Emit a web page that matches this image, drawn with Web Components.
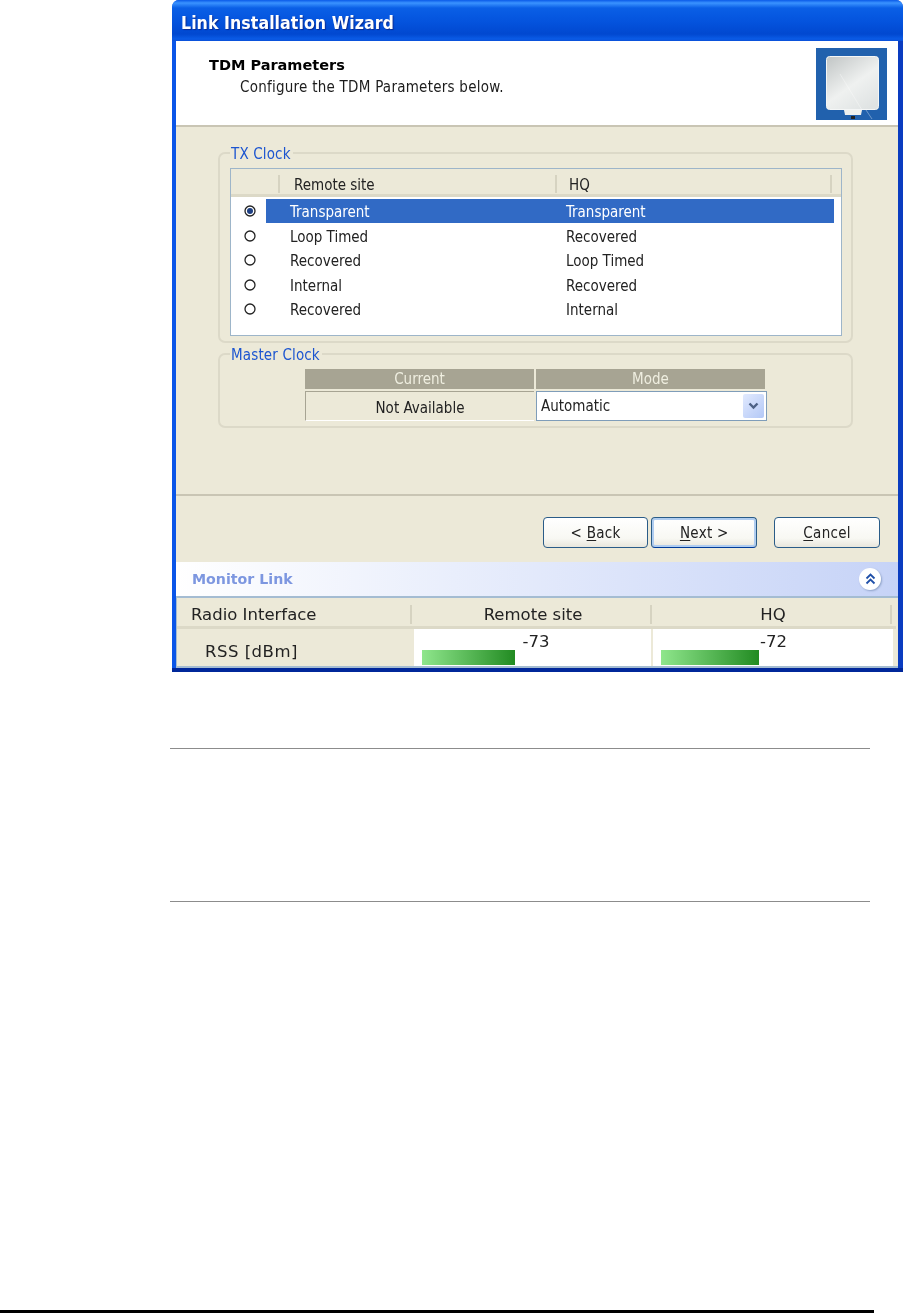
<!DOCTYPE html>
<html>
<head>
<meta charset="utf-8">
<title>Link Installation Wizard</title>
<style>
  html, body { margin: 0; padding: 0; background: #fff; }
  body { font-family: "DejaVu Sans", sans-serif; color: #111; }
</style>
</head>
<body>
<manual-page>
  <xp-window caption="Link Installation Wizard">
    <wizard-header title-text="TDM Parameters" subtitle="Configure the TDM Parameters below."></wizard-header>
    <wizard-body>
      <group-box caption="TX Clock" class="tx">
        <clock-table>
          <clock-row remote="Transparent" hq="Transparent" selected></clock-row>
          <clock-row remote="Loop Timed" hq="Recovered"></clock-row>
          <clock-row remote="Recovered" hq="Loop Timed"></clock-row>
          <clock-row remote="Internal" hq="Recovered"></clock-row>
          <clock-row remote="Recovered" hq="Internal"></clock-row>
        </clock-table>
      </group-box>
      <group-box caption="Master Clock" class="master">
        <master-table></master-table>
      </group-box>
    </wizard-body>
    <wizard-buttons>
      <xp-button label="&lt; |B|ack"></xp-button>
      <xp-button label="|N|ext &gt;" focused></xp-button>
      <xp-button label="|C|ancel" class="cancel"></xp-button>
    </wizard-buttons>
    <monitor-link></monitor-link>
  </xp-window>
</manual-page>

<script>
function makeTemplate(html) {
  const t = document.createElement('template');
  t.innerHTML = html;
  return t;
}

// small base so each element only has to say its template
class ShadowEl extends HTMLElement {
  constructor(template) {
    super();
    this.attachShadow({ mode: 'open' });
    this.shadowRoot.appendChild(template.content.cloneNode(true));
  }
  $(sel) { return this.shadowRoot.querySelector(sel); }
}

const pageTpl = makeTemplate(`
<style>
  :host { display: block; width: 903px; height: 1313px; overflow: hidden; }
  .shot { padding-left: 172px; }
  .rules { margin: 76px 33px 0 170px; height: 152px; border-top: 1px solid #8c8c8c; border-bottom: 1px solid #8c8c8c; }
  .foot { margin: 408px 29px 0 0; height: 3px; background: #000; }
</style>
<div class="shot"><slot></slot></div>
<div class="rules"></div>
<div class="foot"></div>
`);
customElements.define('manual-page', class extends ShadowEl {
  constructor() { super(pageTpl); }
});

const windowTpl = makeTemplate(`
<style>
  :host { display: block; width: 731px; height: 672px; }
  .frame {
    height: 672px; box-sizing: border-box;
    display: flex; flex-direction: column;
    border-radius: 7px 7px 0 0;
    background: linear-gradient(0deg, #00279a 0 4px, transparent 4px),
                linear-gradient(90deg, #0a55e8 0 4px, #0a4fd8 4px 726px, #0a3cc0 726px);
    padding: 0 5px 4px 4px;
    filter: blur(0.35px);
  }
  .bar {
    flex: none; height: 41px; margin: 0 -5px 0 -4px; padding: 5px 0 0 9px; box-sizing: border-box;
    display: flex; align-items: center;
    background: linear-gradient(180deg, #0a5ae8 0, #3a93ff 3px, #0a5fe6 8px, #0453dd 22px, #0148d0 34px, #0a5be6 39px, #0a4fd8 41px);
    border-radius: 7px 7px 0 0;
    color: #fff; font: bold 17.6px "DejaVu Sans Condensed", "DejaVu Sans", sans-serif;
    letter-spacing: .05px;
    text-shadow: 1px 1px 1px #0a2a90;
  }
  .content { flex: 1; min-height: 0; display: flex; flex-direction: column; background: #ECE9D8; }
</style>
<div class="frame">
  <div class="bar"></div>
  <div class="content"><slot></slot></div>
</div>
`);
customElements.define('xp-window', class extends ShadowEl {
  constructor() { super(windowTpl); }
  connectedCallback() { this.$('.bar').textContent = this.getAttribute('caption'); }
});

const headerTpl = makeTemplate(`
<style>
  :host { display: block; flex: none; }
  .head {
    height: 86px; box-sizing: border-box; background: #fff;
    border-bottom: 2px solid #c9c5b4;
    display: flex; justify-content: space-between;
    padding: 7px 11px 0 33px;
  }
  .t { font: bold 14.5px "DejaVu Sans", sans-serif; margin-top: 8px; line-height: 18px; color: #000; }
  .s { font: 15px "DejaVu Sans Condensed", "DejaVu Sans", sans-serif; margin: 4px 0 0 31px; line-height: 18px; color: #1c1c1c; letter-spacing: .25px; }
  svg { display: block; }
</style>
<div class="head">
  <div>
    <div class="t"></div>
    <div class="s"></div>
  </div>
  <svg width="71" height="72" viewBox="0 0 71 72">
    <defs>
      <linearGradient id="panel" x1="0.1" y1="0" x2="0.8" y2="1">
        <stop offset="0" stop-color="#c4c8c8"/>
        <stop offset=".55" stop-color="#eff1f0"/>
        <stop offset="1" stop-color="#dfe3e3"/>
      </linearGradient>
    </defs>
    <rect width="71" height="72" fill="#2161ad"/>
    <rect x="10.5" y="8.5" width="52" height="53" rx="3" fill="url(#panel)" stroke="#f4f6f6"/>
    <path d="M28 62 L46 62 L45 67 L29 67 Z" fill="#eef0ee"/>
    <rect x="35" y="68" width="4" height="3" fill="#222"/>
    <path d="M24 26 L46 62 M50 62 L56 71" stroke="#fff" stroke-opacity=".5" stroke-width=".7" fill="none"/>
  </svg>
</div>
`);
customElements.define('wizard-header', class extends ShadowEl {
  constructor() { super(headerTpl); }
  connectedCallback() {
    this.$('.t').textContent = this.getAttribute('title-text');
    this.$('.s').textContent = this.getAttribute('subtitle');
  }
});

const bodyTpl = makeTemplate(`
<style>
  :host { display: block; flex: none; height: 369px; box-sizing: border-box; border-bottom: 2px solid #c9c5b4; padding: 17px 0 0 42px; }
  .stack { width: 635px; display: flex; flex-direction: column; gap: 2px; }
</style>
<div class="stack"><slot></slot></div>
`);
customElements.define('wizard-body', class extends ShadowEl {
  constructor() { super(bodyTpl); }
});

const groupTpl = makeTemplate(`
<style>
  :host { display: block; font: 15px "DejaVu Sans Condensed", "DejaVu Sans", sans-serif; }
  fieldset {
    margin: 0; padding: 6px 9px 5px 10px; min-width: 0;
    border: 2px solid #dcd9c8; border-radius: 7px;
  }
  legend { padding: 3px 2px 0 1px; color: #1c55d0; line-height: 15px; letter-spacing: .15px; }
</style>
<fieldset>
  <legend></legend>
  <slot></slot>
</fieldset>
`);
customElements.define('group-box', class extends ShadowEl {
  constructor() { super(groupTpl); }
  connectedCallback() { this.$('legend').textContent = this.getAttribute('caption'); }
});

const tableTpl = makeTemplate(`
<style>
  :host { display: block; }
  .box { height: 168px; box-sizing: border-box; border: 1px solid #9db5c9; background: #fff; }
  .hdr {
    height: 28px; box-sizing: border-box; display: grid; grid-template-columns: 49px 277px 275px 1fr;
    background: #ECE9D8; border-bottom: 3px solid #dcd9c7; color: #222; align-items: start; padding-top: 6px;
  }
  .hdr span { height: 18px; line-height: 20px; border-right: 2px solid #d6d3c1; box-sizing: border-box; padding-left: 14px; }
  .hdr span:nth-child(3) { padding-left: 12px; }
  .hdr span:last-child { border: 0; }
  .rows { padding-top: 2px; }
</style>
<div class="box">
  <div class="hdr"><span></span><span>Remote site</span><span>HQ</span><span></span></div>
  <div class="rows"><slot></slot></div>
</div>
`);
customElements.define('clock-table', class extends ShadowEl {
  constructor() { super(tableTpl); }
});

const rowTpl = makeTemplate(`
<style>
  :host { display: block; }
  .row { height: 24.6px; display: flex; align-items: flex-start; }
  .radio { flex: none; width: 35px; display: flex; padding: 6px 0 0 13px; box-sizing: border-box; }
  .cells { width: 568px; height: 24px; display: grid; grid-template-columns: 300px 1fr; line-height: 26px; color: #222; }
  .cells span:first-child { padding-left: 24px; }
  :host([selected]) .cells { background: #316ac5; color: #fff; }
  svg { display: block; }
</style>
<div class="row">
  <div class="radio">
    <svg width="12" height="12" viewBox="0 0 12 12">
      <circle cx="6" cy="6" r="5" fill="#fff" stroke="#222" stroke-width="1.3"/>
      <circle class="dot" cx="6" cy="6" r="3" fill="#1d3f82"/>
    </svg>
  </div>
  <div class="cells"><span class="a"></span><span class="b"></span></div>
</div>
`);
customElements.define('clock-row', class extends ShadowEl {
  constructor() { super(rowTpl); }
  connectedCallback() {
    this.$('.a').textContent = this.getAttribute('remote');
    this.$('.b').textContent = this.getAttribute('hq');
    if (!this.hasAttribute('selected')) this.$('.dot').remove();
  }
});

const masterTpl = makeTemplate(`
<style>
  :host { display: block; padding: 0 0 0 75px; }
  .grid { width: 460px; display: grid; grid-template-columns: 229px 229px; column-gap: 2px; row-gap: 2px; }
  .h { height: 20px; line-height: 20px; background: #a7a493; color: #efeee0; text-align: center; }
  .cur { height: 30px; line-height: 33px; text-align: center; box-sizing: border-box; color: #222;
    border-left: 1px solid #a7a493; border-top: 1px solid #a7a493; border-bottom: 1px solid #fff; }
  .sel { height: 30px; width: 231px; box-sizing: border-box; border: 1px solid #7f9db9; background: #fff; color: #222;
    display: flex; align-items: center; justify-content: space-between; padding: 0 2px 0 4px; }
  .arrow { width: 21px; height: 24px; border-radius: 2px; background: linear-gradient(135deg, #e2eafe, #b3c8f6);
    display: flex; align-items: center; justify-content: center; }
</style>
<div class="grid">
  <div class="h">Current</div>
  <div class="h">Mode</div>
  <div class="cur">Not Available</div>
  <div class="sel">
    <span>Automatic</span>
    <span class="arrow">
      <svg width="11" height="8" viewBox="0 0 11 8"><path d="M1.5 1.5 L5.5 5.5 L9.5 1.5" fill="none" stroke="#4d6185" stroke-width="2.4"/></svg>
    </span>
  </div>
</div>
`);
customElements.define('master-table', class extends ShadowEl {
  constructor() { super(masterTpl); }
});

const buttonsTpl = makeTemplate(`
<style>
  :host { display: block; flex: none; height: 66px; box-sizing: border-box; padding: 21px 18px 0 0; }
  .row { display: flex; justify-content: flex-end; gap: 3px; }
  ::slotted(.cancel) { margin-left: 14px; }
</style>
<div class="row"><slot></slot></div>
`);
customElements.define('wizard-buttons', class extends ShadowEl {
  constructor() { super(buttonsTpl); }
});

const buttonTpl = makeTemplate(`
<style>
  :host { display: block; }
  button {
    display: block; width: 105.8px; height: 31px; padding: 0; margin: 0; box-sizing: border-box;
    border: 1.5px solid #2a5c88; border-radius: 4px;
    background: linear-gradient(180deg, #ffffff, #f8f8f3 70%, #e8e6dc);
    font: 15px "DejaVu Sans Condensed", "DejaVu Sans", sans-serif; color: #222; letter-spacing: .3px;
  }
  :host([focused]) button { box-shadow: inset 0 0 0 2px #b0cdf0; border-bottom-color: #003c9a; }
  u { text-underline-offset: 2px; }
</style>
<button type="button"></button>
`);
customElements.define('xp-button', class extends ShadowEl {
  constructor() { super(buttonTpl); }
  connectedCallback() {
    // label uses |x| to mark the access key
    const parts = this.getAttribute('label').split('|');
    const btn = this.$('button');
    btn.append(parts[0]);
    const u = document.createElement('u');
    u.textContent = parts[1];
    btn.append(u, parts[2]);
  }
});

const monitorTpl = makeTemplate(`
<style>
  :host { display: block; flex: 1; font: 16.5px "DejaVu Sans", sans-serif; color: #222; }
  .bar {
    height: 36px; box-sizing: border-box; display: flex; justify-content: space-between; align-items: center;
    padding: 0 17px 0 16px;
    background: linear-gradient(90deg, #ffffff, #c6d3f7);
    border-bottom: 2px solid #a4bcd2;
    color: #7d97e0; font: bold 14.2px "DejaVu Sans", sans-serif;
  }
  .toggle { width: 22px; height: 22px; border-radius: 50%; background: #fff; box-shadow: 1px 1px 2px #8fa3c9; display: flex; align-items: center; justify-content: center; }
  .grid { display: grid; grid-template-columns: 235px 240px 244px; border: solid #a4bcd2; border-width: 0 0 2px 1px; }
  .th { height: 31px; box-sizing: border-box; background: #ECE9D8; border-bottom: 3px solid #dcd9c7; padding-top: 7px; }
  .th span { display: block; height: 19px; line-height: 20px; text-align: center; border-right: 2px solid #d6d3c1; padding-left: 4px; box-sizing: border-box; }
  .th.first span { text-align: left; padding-left: 14px; }
  .th.last { padding-right: 4px; }
  .rss { height: 37px; line-height: 46px; padding-left: 28px; background: #ECE9D8; letter-spacing: .5px; }
  .val { height: 37px; background: #fff; margin: 0 1px 0 2px; position: relative; text-align: center; line-height: 26px; padding-left: 7px; box-sizing: border-box; }
  .val.last { margin-right: 3px; margin-left: 1px; padding-left: 1px; }
  .val i { position: absolute; left: 8px; bottom: 1px; height: 15px; background: linear-gradient(90deg, #8fe68c, #228b22); }
</style>
<div class="bar">
  <span>Monitor Link</span>
  <span class="toggle">
    <svg width="11" height="12" viewBox="0 0 11 12"><path d="M1.5 5.5 L5.5 1.5 L9.5 5.5 M1.5 10.5 L5.5 6.5 L9.5 10.5" fill="none" stroke="#1f4fa8" stroke-width="1.8"/></svg>
  </span>
</div>
<div class="grid">
  <div class="th first"><span>Radio Interface</span></div>
  <div class="th"><span>Remote site</span></div>
  <div class="th last"><span>HQ</span></div>
  <div class="rss">RSS [dBm]</div>
  <div class="val">-73<i style="width:93px"></i></div>
  <div class="val last">-72<i style="width:98px"></i></div>
</div>
`);
customElements.define('monitor-link', class extends ShadowEl {
  constructor() { super(monitorTpl); }
});
</script>
</body>
</html>
